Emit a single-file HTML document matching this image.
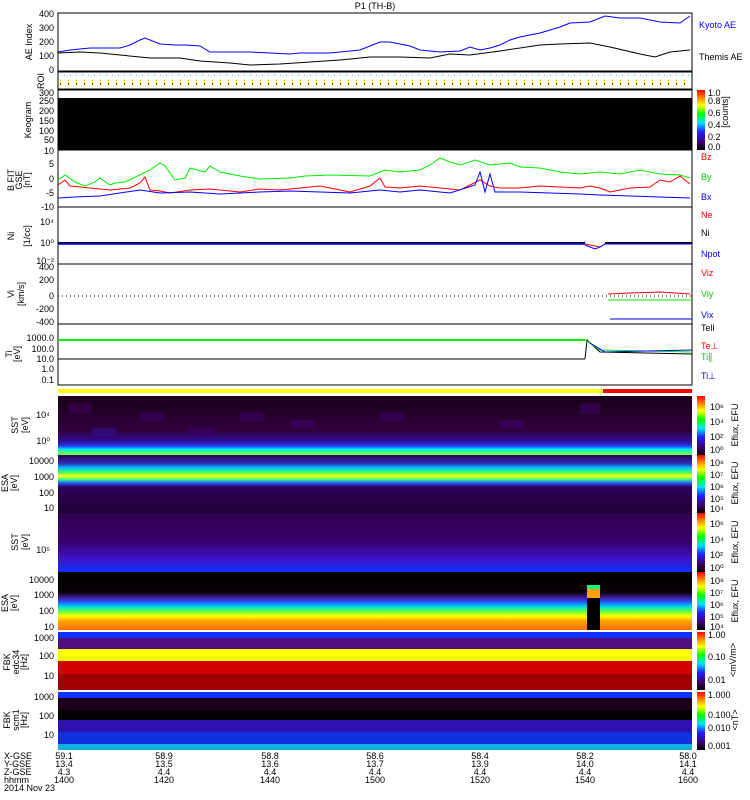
<!DOCTYPE html>
<html><head><meta charset="utf-8"><style>
body{margin:0;background:#fff;width:750px;height:800px;overflow:hidden}
svg{display:block}
text{font-family:"Liberation Sans",sans-serif;font-size:9px;fill:#000}
</style></head><body>
<svg width="750" height="800" viewBox="0 0 750 800" xmlns="http://www.w3.org/2000/svg">
<defs>
<linearGradient id="cb" x1="0" y1="1" x2="0" y2="0">
<stop offset="0" stop-color="#000"/><stop offset="0.12" stop-color="#400060"/><stop offset="0.3" stop-color="#2020ff"/><stop offset="0.45" stop-color="#00e0ff"/><stop offset="0.6" stop-color="#00ff00"/><stop offset="0.75" stop-color="#ffff00"/><stop offset="0.88" stop-color="#ff8000"/><stop offset="1" stop-color="#ff0000"/>
</linearGradient>
<linearGradient id="sst1" x1="0" y1="0" x2="0" y2="1">
<stop offset="0" stop-color="#1a0018"/><stop offset="0.6" stop-color="#300040"/><stop offset="0.78" stop-color="#3010a0"/><stop offset="0.85" stop-color="#2040ff"/><stop offset="0.9" stop-color="#00e0ff"/><stop offset="0.95" stop-color="#40ff80"/><stop offset="1" stop-color="#80ff40"/>
</linearGradient>
<linearGradient id="esa1" x1="0" y1="0" x2="0" y2="1">
<stop offset="0" stop-color="#300050"/><stop offset="0.15" stop-color="#3030c0"/><stop offset="0.22" stop-color="#00c0ff"/><stop offset="0.3" stop-color="#40ff60"/><stop offset="0.36" stop-color="#ffff00"/><stop offset="0.42" stop-color="#40ff80"/><stop offset="0.48" stop-color="#2060ff"/><stop offset="0.55" stop-color="#300060"/><stop offset="1" stop-color="#200030"/>
</linearGradient>
<linearGradient id="sst2" x1="0" y1="0" x2="0" y2="1">
<stop offset="0" stop-color="#300050"/><stop offset="0.5" stop-color="#380070"/><stop offset="0.75" stop-color="#4010c0"/><stop offset="1" stop-color="#1030ff"/>
</linearGradient>
<linearGradient id="esa2" x1="0" y1="0" x2="0" y2="1">
<stop offset="0" stop-color="#000"/><stop offset="0.35" stop-color="#0a0008"/><stop offset="0.45" stop-color="#4020a0"/><stop offset="0.52" stop-color="#2060ff"/><stop offset="0.6" stop-color="#00e0e0"/><stop offset="0.68" stop-color="#60ff40"/><stop offset="0.76" stop-color="#ffff00"/><stop offset="0.85" stop-color="#ffa000"/><stop offset="1" stop-color="#ff7000"/>
</linearGradient>
</defs>

<text x="375" y="9" text-anchor="middle">P1 (TH-B)</text>

<!-- AE panel -->
<rect x="58" y="13" width="634" height="58" fill="#fff" stroke="#000"/>
<polyline fill="none" stroke="#00f" points="58,52 70,50 90,48 120,48 130,45 140,40 145,38 160,44 175,45 185,45 200,46 210,52 250,52 290,54 300,53 330,53 360,50 380,42 390,42 410,46 420,50 440,52 460,51 470,47 480,50 490,48 500,45 510,40 520,37 540,33 560,27 570,23 590,22 605,16 620,18 640,18 660,22 680,23 690,16"/>
<polyline fill="none" stroke="#000" points="58,53 80,52 100,53 120,55 150,58 180,58 200,61 230,63 250,65 280,64 310,62 340,60 370,57 400,57 430,58 450,54 470,55 500,51 520,48 540,45 560,44 590,43 610,47 640,54 655,57 670,52 690,50"/>
<text x="54" y="17" text-anchor="end">400</text><text x="54" y="31" text-anchor="end">300</text><text x="54" y="45" text-anchor="end">200</text><text x="54" y="59" text-anchor="end">100</text><text x="54" y="73" text-anchor="end">0</text>
<text transform="translate(32,42) rotate(-90)" text-anchor="middle">AE Index</text>
<text x="699" y="28" style="fill:#00f">Kyoto AE</text>
<text x="699" y="60">Themis AE</text>

<!-- ROI -->
<rect x="58" y="72" width="634" height="17" fill="#fff" stroke="#000"/>
<line x1="58" y1="75" x2="692" y2="75" stroke="#0cf" stroke-dasharray="1,5"/>
<line x1="60" y1="81" x2="692" y2="81" stroke="#cc0" stroke-width="3" stroke-dasharray="1,7"/>
<line x1="60" y1="84" x2="692" y2="84" stroke="#f00" stroke-width="2" stroke-dasharray="1,7"/>
<text transform="translate(44,81) rotate(-90)" text-anchor="middle">ROI</text>

<!-- Keogram -->
<rect x="58" y="90" width="634" height="60" fill="#fff" stroke="#000"/>
<rect x="58" y="98" width="634" height="52" fill="#000"/>
<text x="54" y="96" text-anchor="end" font-size="8">300</text><text x="54" y="104" text-anchor="end" font-size="8">250</text><text x="54" y="114" text-anchor="end" font-size="8">200</text><text x="54" y="124" text-anchor="end" font-size="8">150</text><text x="54" y="134" text-anchor="end" font-size="8">100</text><text x="54" y="143" text-anchor="end" font-size="8">50</text>
<text transform="translate(31,120) rotate(-90)" text-anchor="middle">Keogram</text>
<rect x="697" y="90" width="8" height="60" fill="url(#cb)"/>
<text x="708" y="96" font-size="8">1.0</text><text x="708" y="104" font-size="8">0.8</text><text x="708" y="116" font-size="8">0.6</text><text x="708" y="128" font-size="8">0.4</text><text x="708" y="140" font-size="8">0.2</text><text x="708" y="150" font-size="8">0.0</text>
<text transform="translate(728,112) rotate(-90)" text-anchor="middle" font-size="8">[counts]</text>

<!-- B FIT -->
<rect x="58" y="150" width="634" height="57" fill="#fff" stroke="#000"/>
<polyline fill="none" stroke="#0e0" points="58,180 65,175 75,182 85,186 95,182 100,178 110,185 115,183 125,182 150,170 160,163 165,166 175,180 185,178 190,168 205,172 210,166 220,172 240,176 260,179 290,178 305,176 330,175 370,176 385,170 400,172 420,170 430,165 440,158 450,162 460,165 475,160 490,165 510,163 520,167 540,168 560,172 580,174 600,172 620,174 640,170 660,174 680,175 690,178"/>
<polyline fill="none" stroke="#f00" points="58,185 65,180 70,186 90,188 110,190 130,188 140,183 145,177 150,190 160,191 170,193 190,190 210,189 240,192 260,189 280,190 300,188 320,186 340,190 350,192 370,186 380,178 385,187 400,188 420,186 440,188 460,190 480,180 490,186 500,188 520,188 540,186 560,187 580,188 590,186 600,188 610,192 630,188 650,187 660,180 670,182 680,176 690,184"/>
<polyline fill="none" stroke="#00f" points="58,198 75,197 100,196 140,190 160,193 190,192 220,194 260,192 290,191 320,192 350,193 380,190 400,192 420,190 450,193 475,185 480,172 485,192 490,174 495,192 520,192 550,193 580,194 600,195 630,196 660,197 690,198"/>
<text x="54" y="154" text-anchor="end">10</text><text x="54" y="167" text-anchor="end">5</text><text x="54" y="182" text-anchor="end">0</text><text x="54" y="196" text-anchor="end">-5</text><text x="54" y="210" text-anchor="end">-10</text>
<text transform="translate(14,180) rotate(-90)" text-anchor="middle" font-size="8">B FIT</text>
<text transform="translate(22,180) rotate(-90)" text-anchor="middle" font-size="7">GSE</text>
<text transform="translate(30,180) rotate(-90)" text-anchor="middle" font-size="8">[nT]</text>
<text x="701" y="160" style="fill:#f00">Bz</text><text x="701" y="180" style="fill:#0c0">By</text><text x="701" y="200" style="fill:#00f">Bx</text>

<!-- Ni -->
<rect x="58" y="207" width="634" height="57" fill="#fff" stroke="#000"/>
<line x1="58" y1="243" x2="585" y2="243" stroke="#000" stroke-width="2"/>
<line x1="58" y1="244" x2="585" y2="244" stroke="#00f" stroke-width="1.5"/>
<polyline fill="none" stroke="#f00" points="585,244 600,247 605,244"/>
<polyline fill="none" stroke="#00f" points="585,245 595,249 600,247 605,244"/>
<line x1="605" y1="243" x2="692" y2="243" stroke="#000" stroke-width="2"/>
<line x1="605" y1="244" x2="692" y2="244" stroke="#00f"/>
<text x="54" y="225" text-anchor="end">10⁴</text><text x="54" y="246" text-anchor="end">10⁰</text><text x="54" y="264" text-anchor="end">10⁻²</text>
<text transform="translate(14,236) rotate(-90)" text-anchor="middle">Ni</text>
<text transform="translate(30,236) rotate(-90)" text-anchor="middle" font-size="8">[1/cc]</text>
<text x="701" y="218" style="fill:#f00">Ne</text><text x="701" y="236">Ni</text><text x="701" y="257" style="fill:#00f">Npot</text>

<!-- Vi -->
<rect x="58" y="264" width="634" height="60" fill="#fff" stroke="#000"/>
<line x1="58" y1="296" x2="692" y2="296" stroke="#000" stroke-dasharray="1,3"/>
<polyline fill="none" stroke="#f00" points="608,294 630,293 660,292 690,294"/>
<line x1="608" y1="300" x2="692" y2="300" stroke="#0e0"/>
<line x1="610" y1="319" x2="692" y2="319" stroke="#00f"/>
<text x="54" y="270" text-anchor="end" font-size="8">400</text><text x="54" y="283" text-anchor="end" font-size="8">200</text><text x="54" y="299" text-anchor="end" font-size="8">0</text><text x="54" y="312" text-anchor="end" font-size="8">-200</text><text x="54" y="325" text-anchor="end" font-size="8">-400</text>
<text transform="translate(14,294) rotate(-90)" text-anchor="middle">Vi</text>
<text transform="translate(24,294) rotate(-90)" text-anchor="middle" font-size="8">[km/s]</text>
<text x="701" y="276" style="fill:#f00">Viz</text><text x="701" y="297" style="fill:#0c0">Viy</text><text x="701" y="318" style="fill:#00f">Vix</text>

<!-- Ti -->
<rect x="58" y="324" width="634" height="61" fill="#fff" stroke="#000"/>
<line x1="58" y1="340" x2="585" y2="340" stroke="#0e0" stroke-width="2"/>
<line x1="58" y1="359" x2="585" y2="359" stroke="#000"/>
<polyline fill="none" stroke="#000" points="585,359 587,340 600,352 692,354"/>
<polyline fill="none" stroke="#0e0" points="585,340 600,350 692,352"/>
<polyline fill="none" stroke="#00f" points="590,343 605,352 692,350"/>
<text x="54" y="341" text-anchor="end" font-size="8">1000.0</text><text x="54" y="352" text-anchor="end" font-size="8">100.0</text><text x="54" y="362" text-anchor="end" font-size="8">10.0</text><text x="54" y="372" text-anchor="end" font-size="8">1.0</text><text x="54" y="383" text-anchor="end" font-size="8">0.1</text>
<text transform="translate(12,354) rotate(-90)" text-anchor="middle">Ti</text>
<text transform="translate(20,354) rotate(-90)" text-anchor="middle" font-size="8">[eV]</text>
<text x="701" y="331">Tell</text><text x="701" y="349" style="fill:#f00">Te⊥</text><text x="701" y="360" style="fill:#0c0">Ti∥</text><text x="701" y="379" style="fill:#00f">Ti⊥</text>

<!-- bar -->
<rect x="58" y="389" width="545" height="4" fill="#ff0"/>
<rect x="603" y="389" width="89" height="4" fill="#f00"/>

<!-- SST1 -->
<rect x="58" y="396" width="634" height="59" fill="url(#sst1)"/>
<g opacity="0.5">
<rect x="68" y="403" width="24" height="11" fill="#400060"/><rect x="92" y="428" width="24" height="8" fill="#3010a0"/><rect x="140" y="413" width="24" height="8" fill="#400070"/><rect x="190" y="428" width="24" height="8" fill="#400070"/><rect x="240" y="413" width="24" height="8" fill="#400070"/><rect x="290" y="420" width="24" height="8" fill="#400070"/><rect x="380" y="413" width="24" height="8" fill="#400070"/><rect x="500" y="420" width="24" height="8" fill="#400070"/><rect x="580" y="403" width="20" height="11" fill="#400070"/>
</g>
<text x="50" y="418" text-anchor="end" font-size="8">10⁴</text><text x="50" y="444" text-anchor="end" font-size="8">10⁰</text>
<text transform="translate(18,425) rotate(-90)" text-anchor="middle" font-size="8">SST</text>
<text transform="translate(28,425) rotate(-90)" text-anchor="middle" font-size="7">[eV]</text>
<rect x="697" y="396" width="8" height="59" fill="url(#cb)"/>

<!-- ESA1 -->
<rect x="58" y="455" width="634" height="58" fill="url(#esa1)"/>
<text x="54" y="464" text-anchor="end" font-size="8">10000</text><text x="54" y="480" text-anchor="end" font-size="8">1000</text><text x="54" y="496" text-anchor="end" font-size="8">100</text><text x="54" y="511" text-anchor="end" font-size="8">10</text>
<text transform="translate(8,483) rotate(-90)" text-anchor="middle" font-size="8">ESA</text>
<text transform="translate(17,483) rotate(-90)" text-anchor="middle" font-size="7">[eV]</text>
<rect x="697" y="455" width="8" height="58" fill="url(#cb)"/>

<!-- SST2 -->
<rect x="58" y="513" width="634" height="59" fill="url(#sst2)"/>
<text x="50" y="553" text-anchor="end" font-size="8">10⁵</text>
<text transform="translate(18,542) rotate(-90)" text-anchor="middle" font-size="8">SST</text>
<text transform="translate(28,542) rotate(-90)" text-anchor="middle" font-size="7">[eV]</text>
<rect x="697" y="513" width="8" height="59" fill="url(#cb)"/>

<!-- ESA2 -->
<rect x="58" y="572" width="634" height="58" fill="url(#esa2)"/>
<rect x="587" y="585" width="13" height="13" fill="#ffa000"/><rect x="587" y="585" width="13" height="4" fill="#00ff80"/>
<rect x="587" y="598" width="13" height="32" fill="#000"/>
<text x="54" y="583" text-anchor="end" font-size="8">10000</text><text x="54" y="598" text-anchor="end" font-size="8">1000</text><text x="54" y="614" text-anchor="end" font-size="8">100</text><text x="54" y="630" text-anchor="end" font-size="8">10</text>
<text transform="translate(8,603) rotate(-90)" text-anchor="middle" font-size="8">ESA</text>
<text transform="translate(17,603) rotate(-90)" text-anchor="middle" font-size="7">[eV]</text>
<rect x="697" y="572" width="8" height="58" fill="url(#cb)"/>

<g font-size="8">
<text x="710" y="410" font-size="8">10⁶</text><text x="710" y="425" font-size="8">10⁴</text><text x="710" y="440" font-size="8">10²</text><text x="710" y="453" font-size="8">10⁰</text>
<text x="710" y="466" font-size="8">10⁸</text><text x="710" y="478" font-size="8">10⁷</text><text x="710" y="490" font-size="8">10⁶</text><text x="710" y="502" font-size="8">10⁵</text><text x="710" y="512" font-size="8">10⁴</text>
<text x="710" y="527" font-size="8">10⁶</text><text x="710" y="543" font-size="8">10⁴</text><text x="710" y="558" font-size="8">10²</text><text x="710" y="571" font-size="8">10⁰</text>
<text x="710" y="584" font-size="8">10⁸</text><text x="710" y="596" font-size="8">10⁷</text><text x="710" y="608" font-size="8">10⁶</text><text x="710" y="620" font-size="8">10⁵</text><text x="710" y="630" font-size="8">10⁴</text>
</g>
<text transform="translate(738,425) rotate(-90)" text-anchor="middle" font-size="8">Eflux, EFU</text>
<text transform="translate(738,483) rotate(-90)" text-anchor="middle" font-size="8">Eflux, EFU</text>
<text transform="translate(738,542) rotate(-90)" text-anchor="middle" font-size="8">Eflux, EFU</text>
<text transform="translate(738,601) rotate(-90)" text-anchor="middle" font-size="8">Eflux, EFU</text>

<!-- FBK1 -->
<rect x="58" y="632" width="634" height="6" fill="#1030ff"/>
<rect x="58" y="638" width="634" height="11" fill="#501080"/>
<rect x="58" y="649" width="634" height="12" fill="#ffff00"/>
<rect x="58" y="661" width="634" height="29" fill="#a00000"/>
<rect x="58" y="661" width="634" height="13" fill="#d00000"/>
<text x="54" y="641" text-anchor="end" font-size="8">1000</text><text x="54" y="659" text-anchor="end" font-size="8">100</text><text x="54" y="679" text-anchor="end" font-size="8">10</text>
<text transform="translate(10,662) rotate(-90)" text-anchor="middle" font-size="8">FBK</text>
<text transform="translate(19,662) rotate(-90)" text-anchor="middle" font-size="7">edc34</text>
<text transform="translate(27,662) rotate(-90)" text-anchor="middle" font-size="7">[Hz]</text>
<rect x="697" y="632" width="8" height="58" fill="url(#cb)"/>
<text x="708" y="638" font-size="8">1.00</text><text x="708" y="660" font-size="8">0.10</text><text x="708" y="683" font-size="8">0.01</text>
<text transform="translate(736,660) rotate(-90)" text-anchor="middle" font-size="8">&lt;mV/m&gt;</text>

<!-- FBK2 -->
<rect x="58" y="692" width="634" height="58" fill="#1a0018"/>
<rect x="58" y="692" width="634" height="6" fill="#1030ff"/>
<rect x="58" y="710" width="634" height="10" fill="#050005"/>
<rect x="58" y="720" width="634" height="12" fill="#3010b0"/>
<rect x="58" y="732" width="634" height="12" fill="#1030e0"/>
<rect x="58" y="744" width="634" height="6" fill="#10b0e0"/>
<text x="54" y="700" text-anchor="end" font-size="8">1000</text><text x="54" y="719" text-anchor="end" font-size="8">100</text><text x="54" y="738" text-anchor="end" font-size="8">10</text>
<text transform="translate(10,720) rotate(-90)" text-anchor="middle" font-size="8">FBK</text>
<text transform="translate(19,720) rotate(-90)" text-anchor="middle" font-size="7">scm1</text>
<text transform="translate(27,720) rotate(-90)" text-anchor="middle" font-size="7">[Hz]</text>
<rect x="697" y="692" width="8" height="58" fill="url(#cb)"/>
<text x="708" y="698" font-size="8">1.000</text><text x="708" y="718" font-size="8">0.100</text><text x="708" y="731" font-size="8">0.010</text><text x="708" y="749" font-size="8">0.001</text>
<text transform="translate(738,720) rotate(-90)" text-anchor="middle" font-size="8">&lt;nT&gt;</text>

<!-- bottom labels -->
<g font-size="8">
<text x="4" y="759">X-GSE</text><text x="4" y="767">Y-GSE</text><text x="4" y="775">Z-GSE</text><text x="4" y="783">hhmm</text><text x="4" y="791">2014 Nov 23</text>
<g text-anchor="middle">
<text x="64" y="759">59.1</text><text x="64" y="767">13.4</text><text x="64" y="775">4.3</text><text x="64" y="783">1400</text>
<text x="164" y="759">58.9</text><text x="164" y="767">13.5</text><text x="164" y="775">4.4</text><text x="164" y="783">1420</text>
<text x="270" y="759">58.8</text><text x="270" y="767">13.6</text><text x="270" y="775">4.4</text><text x="270" y="783">1440</text>
<text x="375" y="759">58.6</text><text x="375" y="767">13.7</text><text x="375" y="775">4.4</text><text x="375" y="783">1500</text>
<text x="480" y="759">58.4</text><text x="480" y="767">13.9</text><text x="480" y="775">4.4</text><text x="480" y="783">1520</text>
<text x="585" y="759">58.2</text><text x="585" y="767">14.0</text><text x="585" y="775">4.4</text><text x="585" y="783">1540</text>
<text x="688" y="759">58.0</text><text x="688" y="767">14.1</text><text x="688" y="775">4.4</text><text x="688" y="783">1600</text>
</g></g>
</svg>
</body></html>
